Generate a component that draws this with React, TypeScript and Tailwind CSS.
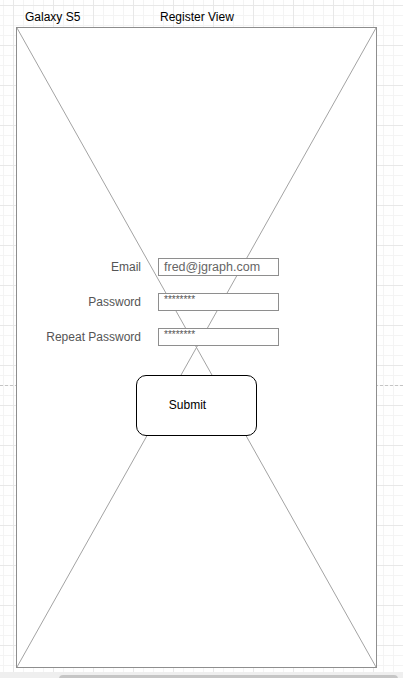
import React from "react";

const fields = [
  { label: "Email", value: "fred@jgraph.com", secret: false },
  { label: "Password", value: "********", secret: true },
  { label: "Repeat Password", value: "********", secret: true },
];

export default function App() {
  return (
    <div className="relative flex h-[678px] w-[403px] flex-col overflow-hidden bg-white bg-[linear-gradient(#e8e8e8_1px,transparent_1px),linear-gradient(90deg,#e8e8e8_1px,transparent_1px),linear-gradient(#f4f4f4_1px,transparent_1px),linear-gradient(90deg,#f4f4f4_1px,transparent_1px)] bg-[size:40px_40px,40px_40px,10px_10px,10px_10px] bg-[position:13px_5px] font-['Liberation_Sans',Helvetica,Arial,sans-serif]">
      {/* page break */}
      <div className="absolute left-0 right-0 top-[385px] border-t border-dashed border-[#c4c4c4]" />

      <div className="flex h-[27px] shrink-0 pl-[25px] pt-[10px] text-[12px] leading-[14px] text-black">
        <span className="w-[135px]">Galaxy S5</span>
        <span>Register View</span>
      </div>

      <div className="relative ml-[16px] h-[641px] w-[361px] shrink-0 border border-[#8e8e8e] bg-white">
        <svg
          className="absolute inset-0 h-full w-full"
          viewBox="0 0 100 100"
          preserveAspectRatio="none"
        >
          <line x1="0" y1="0" x2="100" y2="100" stroke="#a3a3a3" strokeWidth="1" vectorEffect="non-scaling-stroke" />
          <line x1="100" y1="0" x2="0" y2="100" stroke="#a3a3a3" strokeWidth="1" vectorEffect="non-scaling-stroke" />
        </svg>

        <div className="relative flex flex-col gap-[17px] pt-[230px]">
          {fields.map((f) => (
            <div key={f.label} className="flex h-[18px] items-center">
              <span className="w-[124px] text-right text-[12px] leading-[18px] text-[#555]">
                {f.label}
              </span>
              <div className="ml-[17px] flex h-[18px] w-[121px] items-center border border-[#8e8e8e] bg-white pl-[5px]">
                {f.secret ? (
                  <span className="-mt-[4px] text-[10px] leading-[12px] text-[#555]">{f.value}</span>
                ) : (
                  <span className="text-[12.5px] leading-[16px] text-[#666]">{f.value}</span>
                )}
              </div>
            </div>
          ))}

          <button className="ml-[119px] mt-[12px] flex h-[61px] w-[121px] items-center justify-center rounded-[10px] border border-black bg-white text-[12px] text-black">
            <span className="-ml-[18px] -mt-[1px]">Submit</span>
          </button>
        </div>
      </div>

      <div className="mt-[4px] h-[6px] shrink-0 bg-[#efefef] pl-[59px] pr-[5px] pt-[3px]">
        <div className="h-[8px] rounded-[4px] bg-[#c6c6c6]" />
      </div>
    </div>
  );
}
